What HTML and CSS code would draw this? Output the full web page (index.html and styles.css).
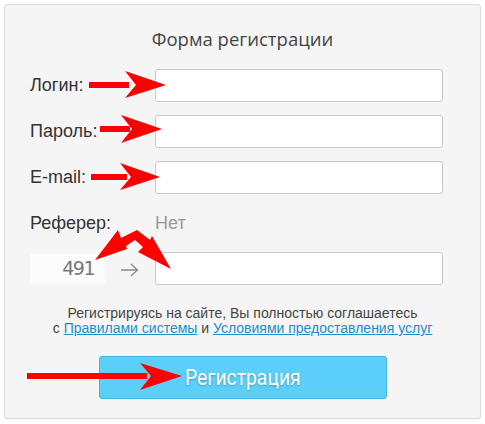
FILE: index.html
```html
<!DOCTYPE html>
<html lang="ru">
<head>
    <meta charset="UTF-8">
    <meta name="viewport" content="width=device-width, initial-scale=1.0">
    <title>Форма регистрации</title>
    <link rel="stylesheet" href="styles.css">
</head>
<body>
    <div class="panel">
        <h2 class="title">Форма регистрации</h2>
        <form class="form">
            <div class="row">
                <label for="login">Логин:</label>
                <input type="text" id="login">
            </div>
            <div class="row">
                <label for="pass">Пароль:</label>
                <input type="password" id="pass">
            </div>
            <div class="row">
                <label for="email">E-mail:</label>
                <input type="text" id="email">
            </div>
            <div class="row row-ref">
                <span class="label">Реферер:</span>
                <span class="none">Нет</span>
            </div>
            <div class="row row-captcha">
                <div class="captcha-wrap">
                    <span class="captcha">491</span>
                    <svg class="go" width="19" height="14" viewBox="0 0 19 14">
                        <path d="M1 7H17.5M11 1L17.5 7L11 13" fill="none" stroke="#8a8a8a" stroke-width="1.3"/>
                    </svg>
                </div>
                <input type="text" id="code">
            </div>
            <p class="terms">
                Регистрируясь на сайте, Вы полностью соглашаетесь<br>
                с <a href="#">Правилами системы</a> и <a href="#">Условиями предоставления услуг</a>
            </p>
            <div class="actions">
                <button type="button" class="btn"><span class="btn-text">Регистрация</span></button>
            </div>
        </form>
    </div>

    <!-- красные стрелки поверх формы -->
    <svg class="arrows" width="485" height="424" viewBox="0 0 485 424">
        <g fill="#f00">
            <rect x="89" y="82" width="40" height="6"/>
            <polygon points="125,71 166,85 125,98 136,85"/>
            <rect x="100" y="126" width="30" height="6"/>
            <polygon points="121,115 162,129 121,143 132,129"/>
            <rect x="91" y="174" width="36" height="6"/>
            <polygon points="120,163 160,177 120,190 131,177"/>
            <rect x="27" y="373" width="120" height="6"/>
            <polygon points="140,363 182,376 140,390 151,376"/>
            <!-- двойная стрелка к капче -->
            <polygon points="95,260 118,230 121,238 137,230 150,240 152,236 171,269 138,252 143,247 135,240 126,246 127,249"/>
        </g>
    </svg>
</body>
</html>
```

FILE: styles.css
```css
body {
    margin: 0;
    padding: 4px;
    background-color: #fff;
    font-family: "Liberation Sans", Arial, sans-serif;
    color: #333;
}
.panel {
    box-sizing: border-box;
    width: 477px;
    height: 415px;
    border: 1px solid #dcdcdc;
    border-radius: 3px;
    background-color: #f5f5f5;
    box-shadow: 0 1px 1px rgba(0, 0, 0, 0.05);
}
.title {
    margin: 0;
    padding-top: 22px;
    text-align: center;
    font-family: "Open Sans", sans-serif;
    font-weight: normal;
    font-size: 18.5px;
    line-height: 24px;
    color: #444;
}
.form {
    padding: 18px 0 0 25px;
}
.row {
    display: flex;
    align-items: center;
    margin-bottom: 13px;
}
.row label, .row .label {
    width: 125px;
    font-size: 18px;
}
.row input {
    width: 288px;
    height: 33px;
    box-sizing: border-box;
    border: 1px solid #c8c8c8;
    border-radius: 3px;
    background-color: #fff;
    padding: 4px 8px;
    font-size: 15px;
}
.row-ref {
    height: 33px;
    margin-bottom: 12px;
}
.none {
    font-size: 18px;
    color: #999;
}
.captcha-wrap {
    width: 125px;
    display: flex;
    align-items: center;
}
.captcha {
    width: 75px;
    height: 29px;
    box-sizing: border-box;
    padding-right: 11px;
    background-color: #fcfcfc;
    text-align: right;
    font-family: "DejaVu Sans", sans-serif;
    font-size: 19px;
    line-height: 29px;
    letter-spacing: -1.5px;
    color: #777;
}
.go {
    margin: 2px 0 0 15px;
}
.terms {
    margin: 21px 25px 0 0;
    text-align: center;
    font-size: 14px;
    line-height: 15px;
    color: #444;
}
.terms a {
    color: #1a8ec9;
}
.actions {
    padding: 20px 0 0 69px;
}
.btn {
    width: 288px;
    height: 43px;
    border: 1px solid #3fb7e4;
    border-radius: 3px;
    background-color: #5ccff8;
    color: #fff;
    font-family: "Roboto", sans-serif;
    font-size: 22px;
    text-shadow: 0 1px 2px rgba(0, 0, 0, 0.25);
    cursor: pointer;
}
.btn-text {
    display: inline-block;
    transform: scaleX(0.88);
}
.arrows {
    position: absolute;
    top: 0;
    left: 0;
    pointer-events: none;
}
```
